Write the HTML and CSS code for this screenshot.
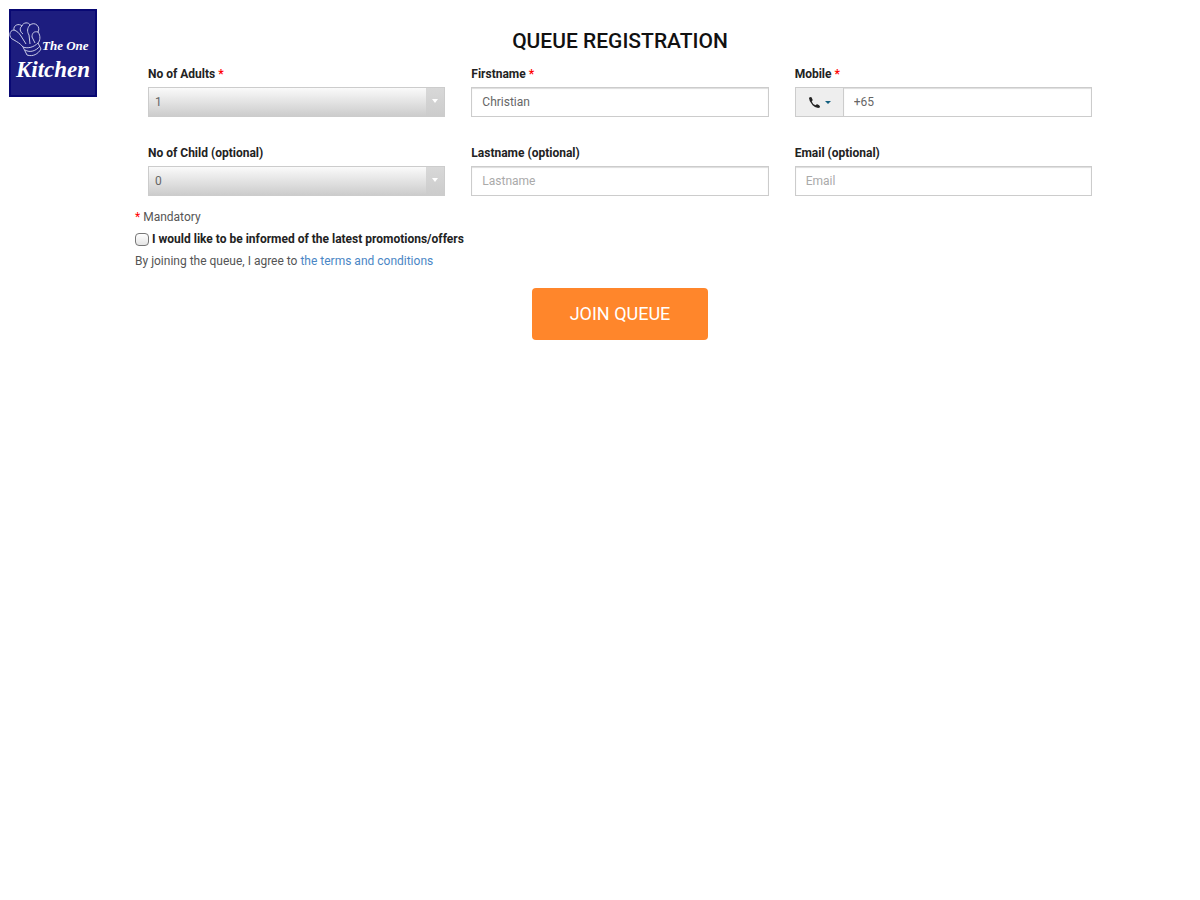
FILE: index.html
```html
<!DOCTYPE html>
<html lang="en">

<head>
    <meta charset="UTF-8">
    <meta name="viewport" content="width=device-width, initial-scale=1.0">
    <title>Queue Registration</title>
    <link rel="stylesheet" href="styles.css">
</head>

<body>
    <div class="page">
        <svg class="logo" viewBox="0 0 88 88" role="img" aria-label="The One Kitchen">
            <rect class="logo_bg" x="1" y="1" width="86" height="86" />
            <!-- chef hat -->
            <g class="logo_hat">
                <path d="M14 38 C11 34 8 33 5 31 C-1 29 0 21 5 21 C4 16 10 14 13 17 C14 13 20 13 21 16 C26 12 32 18 29 23 C32 27 31 32 29 34 L32 40 C29 45 24 48 18 46 Z" />
                <path d="M14 38 C19 40 25 38 29 34 M16 41 C21 44 27 42 31 37" />
                <path d="M5 21 C8 22 10 24 12 27 M13 17 C10 19 11 23 14 25 M21 16 C18 19 18 23 20 26 M29 23 C25 22 23 24 23 28 M12 27 L17 35 M20 26 L21 35 M23 28 L26 34" />
            </g>
            <text class="logo_small" x="33" y="41">The One</text>
            <text class="logo_big" x="7" y="68">Kitchen</text>
        </svg>

        <form class="queue_form">
            <h1 class="title">QUEUE REGISTRATION</h1>
            <div class="fields">
                <div class="field">
                    <label for="adults">No of Adults <span class="red">*</span></label>
                    <select id="adults" class="control select">
                        <option>1</option>
                        <option>2</option>
                        <option>3</option>
                        <option>4</option>
                    </select>
                </div>
                <div class="field">
                    <label for="firstname">Firstname <span class="red">*</span></label>
                    <input type="text" id="firstname" class="control" value="Christian">
                </div>
                <div class="field">
                    <label for="mobile">Mobile <span class="red">*</span></label>
                    <div class="input_group">
                        <button type="button" class="phone_btn" aria-label="Country code">
                            <svg class="phone" viewBox="0 0 14 14" aria-hidden="true">
                                <path d="M1 2 L3 1 Q4 1 4 2 L5 4 Q5 5 4 6 Q5 9 8 10 Q9 9 10 9 L12 10 Q13 11 13 12 L11 13 Q8 13 5 10 Q1 6 1 2 Z" />
                            </svg>
                            <span class="caret"></span>
                        </button>
                        <input type="tel" id="mobile" class="control" value="+65">
                    </div>
                </div>
                <div class="field">
                    <label for="child">No of Child (optional)</label>
                    <select id="child" class="control select">
                        <option>0</option>
                        <option>1</option>
                        <option>2</option>
                        <option>3</option>
                    </select>
                </div>
                <div class="field">
                    <label for="lastname">Lastname (optional)</label>
                    <input type="text" id="lastname" class="control" placeholder="Lastname">
                </div>
                <div class="field">
                    <label for="email">Email (optional)</label>
                    <input type="email" id="email" class="control" placeholder="Email">
                </div>
            </div>

            <p class="note"><span class="red">*</span> Mandatory</p>
            <div class="promo">
                <input type="checkbox" id="promo" class="check">
                <label for="promo">I would like to be informed of the latest promotions/offers</label>
            </div>
            <p class="note">By joining the queue, I agree to <a href="#">the terms and conditions</a></p>
            <button type="submit" class="join_btn">JOIN QUEUE</button>
        </form>
    </div>
</body>

</html>
```
FILE: styles.css
```css
* {
    box-sizing: border-box;
    margin: 0;
    padding: 0;
}

body {
    background: #fff;
    color: #555;
    font-family: Roboto, "Liberation Sans", sans-serif;
    font-size: 12px;
    line-height: 22px;
}

.page {
    display: flex;
    align-items: flex-start;
    padding: 9px 95px 9px 9px;
}

.logo {
    flex: none;
    width: 88px;
    height: 88px;
}

.logo_bg {
    fill: #1d1d7f;
    stroke: #080873;
    stroke-width: 2;
}

.logo_hat {
    fill: none;
    stroke: #c9cbe6;
    stroke-width: 1;
}

.logo_small,
.logo_big {
    fill: #fff;
    font-family: "Liberation Serif", serif;
    font-style: italic;
    font-weight: bold;
}

.logo_small {
    font-size: 13px;
}

.logo_big {
    font-size: 23px;
}

.queue_form {
    flex: 1;
    display: flex;
    flex-direction: column;
    margin-left: 38px;
    padding-top: 20px;
}

.title {
    color: #111;
    font-size: 21px;
    font-weight: 500;
    line-height: 24px;
    text-align: center;
    margin-bottom: 12px;
}

.fields {
    display: grid;
    grid-template-columns: repeat(3, 1fr);
    gap: 27px 26px;
    padding: 0 13px;
    margin-bottom: 10px;
}

.field label {
    display: block;
    color: #222;
    font-weight: bold;
    line-height: 18px;
    margin-bottom: 4px;
}

.red {
    color: #f00;
}

.control {
    display: block;
    width: 100%;
    height: 30px;
    padding: 0 10px;
    border: 1px solid #ccc;
    border-radius: 0;
    background: #fff;
    box-shadow: inset 0 1px 1px #ddd;
    color: #666;
    font-family: inherit;
    font-size: 12px;
}

.control::placeholder {
    color: #aaa;
}

.select {
    appearance: none;
    padding: 0 6px;
    border-color: #ccc;
    background:
        url("data:image/svg+xml,%3Csvg xmlns='http://www.w3.org/2000/svg' width='6' height='4'%3E%3Cpath d='M0 0h6L3 4z' fill='white'/%3E%3C/svg%3E") no-repeat right 6px top 11px,
        linear-gradient(#d8d8d8, #ccc) no-repeat right / 18px 100%,
        linear-gradient(#fafafa, #ccc);
    box-shadow: none;
}

.input_group {
    display: flex;
}

.phone_btn {
    flex: none;
    display: flex;
    align-items: center;
    justify-content: center;
    gap: 4px;
    width: 48px;
    border: 1px solid #ccc;
    border-right: 0;
    background: #eee;
}

.phone {
    width: 13px;
    height: 13px;
    fill: #222;
}

.caret {
    border: 3px solid transparent;
    border-top-color: #146080;
    border-bottom: 0;
}

.promo {
    display: flex;
    align-items: center;
    gap: 3px;
    color: #222;
    font-weight: bold;
}

.check {
    appearance: none;
    width: 14px;
    height: 13px;
    border: 1px solid #777;
    border-radius: 4px;
    background: linear-gradient(#fff, #e4e4e4);
}

.check:checked {
    background: #337ab7;
}

.note a {
    color: #4a86c5;
    text-decoration: none;
}

.join_btn {
    align-self: center;
    margin-top: 16px;
    padding: 14px 38px;
    border: 0;
    border-radius: 4px;
    background: #ff862b;
    color: #fff;
    font-family: inherit;
    font-size: 18px;
    line-height: 24px;
}
```
